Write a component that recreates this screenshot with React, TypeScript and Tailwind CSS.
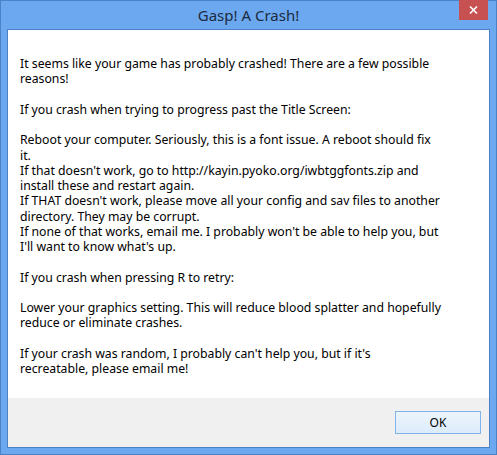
import React from 'react';

const paragraphs: string[][] = [
  ['It seems like your game has probably crashed! There are a few possible', 'reasons!'],
  ['If you crash when trying to progress past the Title Screen:'],
  [
    'Reboot your computer. Seriously, this is a font issue. A reboot should fix',
    'it.',
    "If that doesn't work, go to http://kayin.pyoko.org/iwbtggfonts.zip and",
    'install these and restart again.',
    "If THAT doesn't work, please move all your config and sav files to another",
    'directory. They may be corrupt.',
    "If none of that works, email me. I probably won't be able to help you, but",
    "I'll want to know what's up.",
  ],
  ['If you crash when pressing R to retry:'],
  [
    'Lower your graphics setting. This will reduce blood splatter and hopefully',
    'reduce or eliminate crashes.',
  ],
  [
    "If your crash was random, I probably can't help you, but if it's",
    'recreatable, please email me!',
  ],
];

const App: React.FC = () => {
  return (
    <div className="w-[497px] h-[455px] flex flex-col border border-[#4b82c6] bg-[#6ba8ef] px-[6px] pb-[6px] font-['Noto_Sans',sans-serif]">
      {/* Title bar */}
      <div className="relative h-[28px] shrink-0 flex items-center justify-center">
        <span className="text-[15px] text-[#1c2a3e] leading-none">Gasp! A Crash!</span>
        <div className="absolute right-[2px] -top-px w-[29px] h-[20px] bg-[#c75050] flex items-center justify-center">
          <svg width="9" height="8" viewBox="0 0 9 8">
            <path d="M1 0.5 L8 7.5 M8 0.5 L1 7.5" stroke="white" strokeWidth="1.6" />
          </svg>
        </div>
      </div>

      {/* Client area */}
      <div className="flex-1 flex flex-col border border-[#4b82c6] bg-white">
        <div className="flex-1 pt-[26px] pl-[12px] text-[12.25px] leading-[15.25px] text-black">
          {paragraphs.map((p, i) => (
            <div key={i} className={i > 0 ? 'mt-[15.25px]' : ''}>
              {p.map((line, j) => (
                <div key={j} className="whitespace-nowrap">{line}</div>
              ))}
            </div>
          ))}
        </div>
        <div className="h-[49px] shrink-0 bg-[#f0f0f0] flex justify-end items-start pt-[13px] pr-[8px]">
          <button className="w-[86px] h-[23px] border border-[#7eb4ea] bg-gradient-to-b from-[#ecf4fc] to-[#dcecfc] text-[12px] text-black leading-none">
            OK
          </button>
        </div>
      </div>
    </div>
  );
};

export default App;
